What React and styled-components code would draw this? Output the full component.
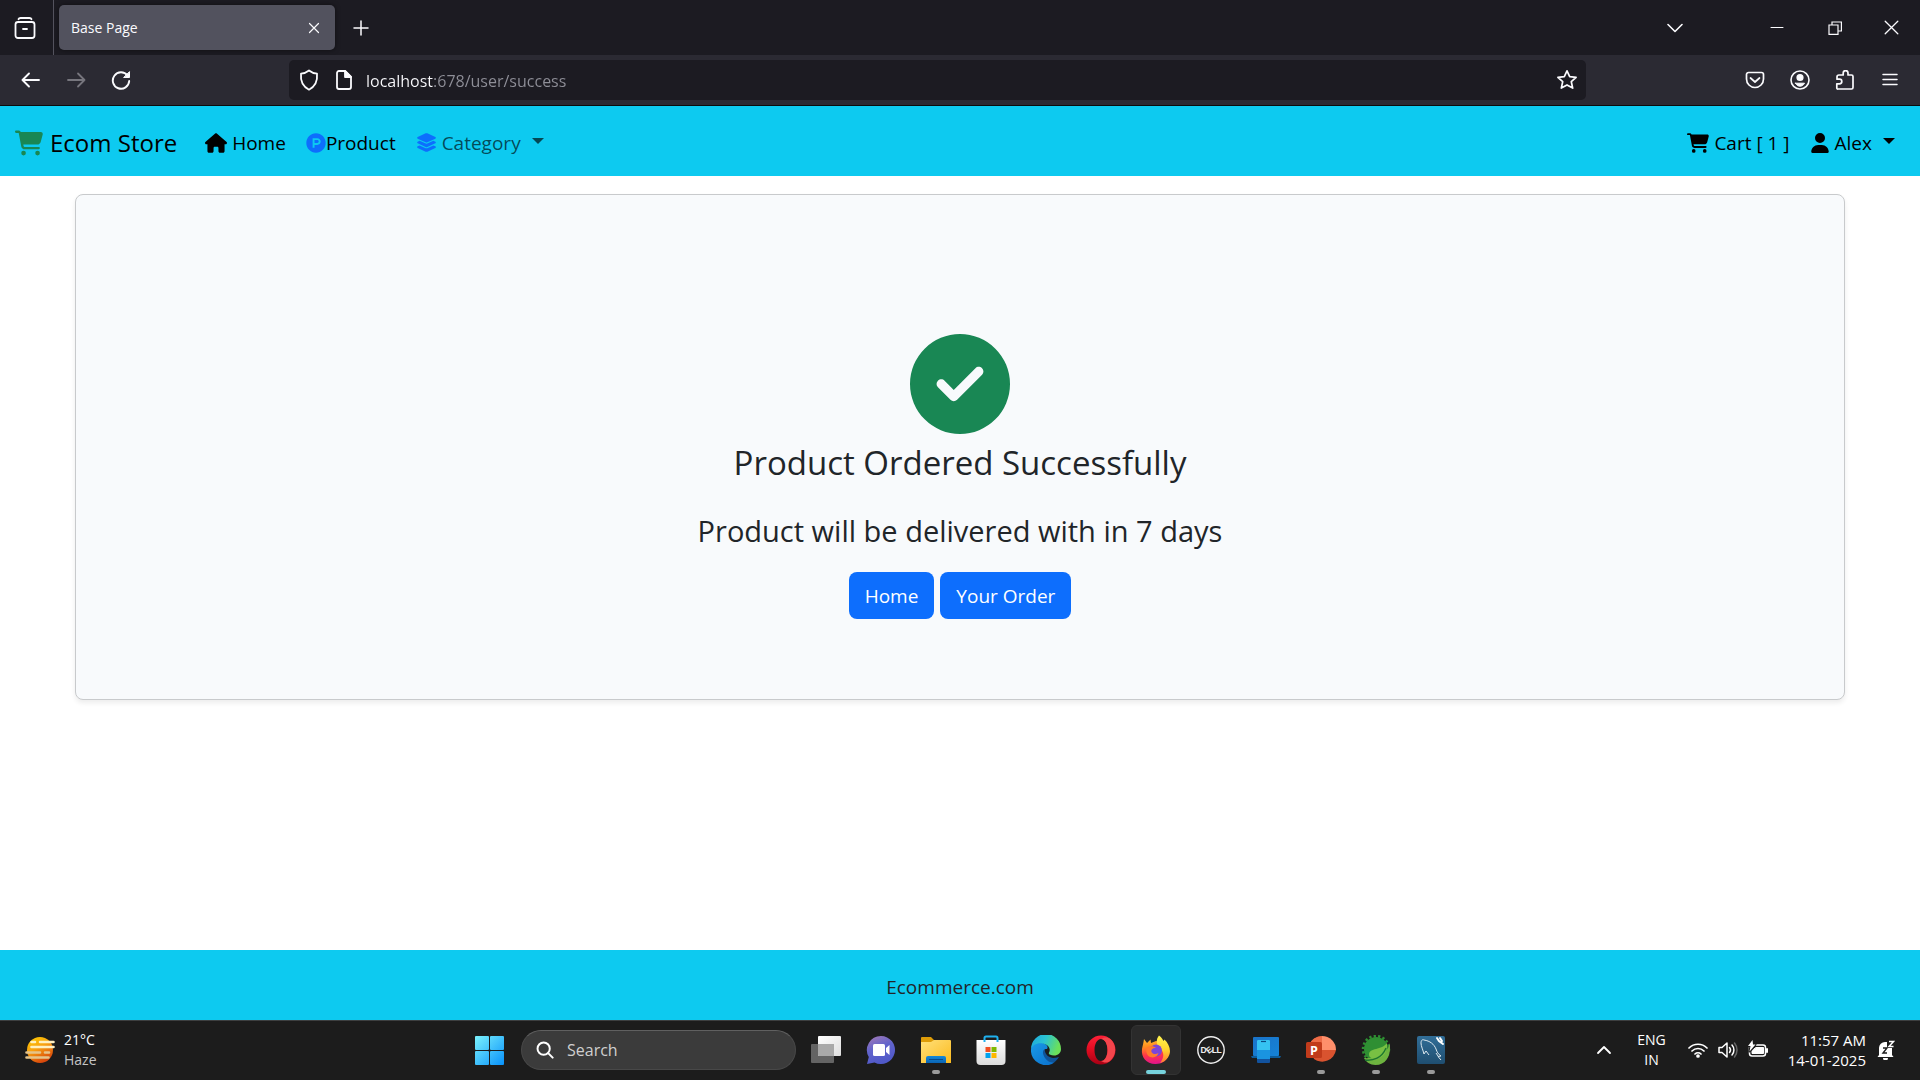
import React from 'react';
import styled, { createGlobalStyle } from 'styled-components';
import {
  FaCartShopping,
  FaHouse,
  FaProductHunt,
  FaLayerGroup,
  FaUser,
  FaCircleCheck,
} from 'react-icons/fa6';

const GlobalStyle = createGlobalStyle`
  *, *::before, *::after { box-sizing: border-box; }
  body {
    margin: 0;
    background: #fff;
    color: #212529;
    font-family: "Open Sans", "Noto Sans", sans-serif;
    font-size: 19px;
  }
  button, input { font: inherit; color: inherit; }
  button { background: none; border: 0; padding: 0; cursor: pointer; }
  a { color: inherit; text-decoration: none; }
  svg { display: block; flex: none; }
`;

const Screen = styled.div`
  display: flex;
  flex-direction: column;
  min-height: 100vh;
`;

/* Browser window */

const TabStrip = styled.header`
  display: flex;
  align-items: center;
  height: 55px;
  background: #1c1b22;
  color: #fbfbfe;
`;

const HistoryButton = styled.button`
  width: 54px;
  height: 55px;
  display: grid;
  place-items: center;
  padding-right: 4px;
  border-right: 1px solid #54535e;
`;

const Tab = styled.div`
  display: flex;
  align-items: center;
  justify-content: space-between;
  width: 276px;
  height: 45px;
  margin-left: 5px;
  padding: 0 8px 0 12px;
  border-radius: 5px;
  background: #52525e;
  box-shadow: 0 0 5px rgba(0, 0, 0, 0.5);
  font-size: 14px;
`;

const IconButton = styled.button`
  width: ${(p) => p.$width || 45}px;
  height: ${(p) => p.$height || 45}px;
  display: grid;
  place-items: center;
  color: ${(p) => p.$color || '#fbfbfe'};
`;

const WindowControls = styled.div`
  display: flex;
  margin-left: auto;
`;

const ToolBar = styled.div`
  display: flex;
  align-items: center;
  height: 51px;
  padding: 0 8px;
  background: #2b2a33;
  border-bottom: 1px solid #0c0c0d;
  color: #fbfbfe;
`;

const ToolGroup = styled.div`
  display: flex;
  width: ${(p) => p.$width}px;
  justify-content: ${(p) => p.$align || 'flex-start'};
`;

const AddressBar = styled.form`
  flex: 1;
  display: flex;
  align-items: center;
  height: 40px;
  padding: 0 8px;
  border-radius: 5px;
  background: #1c1b22;
`;

const AddressIcons = styled.div`
  display: flex;
  width: 69px;
  gap: 13px;
  padding-left: 1px;
`;

const AddressInput = styled.input`
  flex: 1;
  min-width: 0;
  height: 36px;
  padding: 2px 0 0;
  border: 0;
  outline: 0;
  font-size: 16px;
  color: transparent;
  background: linear-gradient(90deg, #fbfbfe 68px, #8f8f98 68px);
  -webkit-background-clip: text;
  background-clip: text;
`;

/* Shop page */

const NavBar = styled.nav`
  display: flex;
  align-items: center;
  height: 70px;
  padding: 3px 25px 0 15px;
  background: #0dcaf0;
  color: #000;
`;

const Brand = styled.a`
  display: flex;
  align-items: center;
  gap: 7px;
  margin-right: 28px;
  font-size: 24px;
  svg { color: #198754; }
`;

const NavLinks = styled.div`
  display: flex;
  align-items: center;
  gap: 20px;
  margin-left: ${(p) => (p.$end ? 'auto' : 0)};
`;

const NavItem = styled.a`
  display: flex;
  align-items: center;
  gap: ${(p) => (p.$tight ? 0 : 5)}px;
  color: ${(p) => (p.$muted ? 'rgba(0, 0, 0, 0.65)' : '#000')};
  white-space: nowrap;
  svg { color: ${(p) => (p.$blue ? '#0d6efd' : '#000')}; }
`;

const Caret = styled.span`
  width: 12px;
  margin: 0 0 4px 6px;
  border: 6px solid transparent;
  border-top-color: currentColor;
  border-bottom: 0;
`;

const Main = styled.main`
  flex: 1;
  padding: 18px 75px;
`;

const Card = styled.section`
  display: flex;
  flex-direction: column;
  align-items: center;
  padding: 139px 20px 80px;
  border: 1px solid #c8cacc;
  border-radius: 8px;
  background: #f8fafc;
  box-shadow: 0 3px 5px rgba(0, 0, 0, 0.075);
  text-align: center;
  > svg { color: #198754; }
`;

const Title = styled.h1`
  margin: 8px 0 0;
  font-size: 33px;
  line-height: 42px;
  font-weight: 400;
`;

const Note = styled.p`
  margin: 29px 0 23px;
  font-size: 29px;
  line-height: 36px;
`;

const Actions = styled.div`
  display: flex;
  gap: 6px;
`;

const ActionLink = styled.a`
  padding: 11px 16px 9px;
  border-radius: 8px;
  background: #0d6efd;
  color: #fff;
  line-height: 27px;
`;

const Footer = styled.footer`
  display: grid;
  place-items: center;
  height: 70px;
  padding-top: 4px;
  background: #0dcaf0;
`;

/* Desktop taskbar */

const TaskBar = styled.footer`
  display: grid;
  grid-template-columns: 1fr auto 1fr;
  align-items: center;
  height: 60px;
  padding-bottom: 1px;
  border-top: 1px solid #3d3f40;
  background: #1c1c1c;
  color: #fff;
  font-size: 14px;
  line-height: 20px;
`;

const Weather = styled.button`
  display: flex;
  align-items: center;
  gap: 9px;
  justify-self: start;
  padding: 0 0 1px 25px;
  text-align: left;
  span { display: block; }
  span + span { color: #c4c4c4; }
`;

const Apps = styled.div`
  display: flex;
  align-items: center;
  gap: 5px;
`;

const SearchBox = styled.label`
  display: flex;
  align-items: center;
  gap: 13px;
  width: 275px;
  height: 40px;
  padding: 0 14px;
  border: 1px solid #484848;
  border-top-color: #606060;
  border-radius: 20px;
  background: #3b3b3b;
  input {
    flex: 1;
    min-width: 0;
    padding: 0;
    border: 0;
    outline: 0;
    background: none;
    font-size: 16px;
  }
  input::placeholder { color: #cfcfcf; opacity: 1; }
`;

const AppButton = styled.button`
  display: flex;
  flex-direction: column;
  align-items: center;
  width: ${(p) => p.$width || 50}px;
  height: 50px;
  padding-top: 9px;
  border: 1px solid ${(p) => (p.$active ? '#333' : 'transparent')};
  border-radius: 6px;
  background: ${(p) => (p.$active ? '#2a2a2a' : 'none')};
  &::after {
    content: "";
    width: ${(p) => (p.$active ? 20 : 8)}px;
    height: 4px;
    margin-top: 5px;
    border-radius: 2px;
    background: ${(p) => (p.$active ? '#76d2dc' : p.$running ? '#9a9a9a' : 'transparent')};
  }
`;

const Tray = styled.div`
  display: flex;
  align-items: center;
  justify-self: end;
  padding-right: 25px;
`;

const TrayButton = styled.button`
  display: flex;
  align-items: center;
  gap: ${(p) => p.$gap || 0}px;
  margin-left: ${(p) => p.$space}px;
  text-align: ${(p) => p.$align || 'center'};
  span { display: block; }
`;

const Clock = styled.div`
  padding-bottom: 1px;
  font-size: 15px;
`;

const Line = ({ size = 20, box = 20, w = 1.5, children, ...rest }) => (
  <svg
    width={size}
    height={size}
    viewBox={`0 0 ${box} ${box}`}
    fill="none"
    stroke="currentColor"
    strokeWidth={w}
    strokeLinecap="round"
    strokeLinejoin="round"
    aria-hidden="true"
    {...rest}
  >
    {children}
  </svg>
);

const AppIcon = ({ children }) => (
  <svg width="30" height="30" viewBox="0 0 30 30" aria-hidden="true">{children}</svg>
);

const Gradient = ({ id, stops, x2 = 1, y2 = 1 }) => (
  <linearGradient id={id} x1="0" y1="0" x2={x2} y2={y2}>
    {stops.map((c, i) => (
      <stop key={i} offset={i / (stops.length - 1)} stopColor={c} />
    ))}
  </linearGradient>
);

const StartIcon = () => (
  <AppIcon>
    <defs>
      <linearGradient id="start" gradientUnits="userSpaceOnUse" x1="0" y1="0" x2="29" y2="29">
        <stop offset="0" stopColor="#7df3fc" />
        <stop offset="1" stopColor="#0a93fb" />
      </linearGradient>
    </defs>
    <g fill="url(#start)">
      <rect x="0" y="1" width="14" height="14" rx="1" />
      <rect x="15" y="1" width="14" height="14" rx="1" />
      <rect x="0" y="16" width="14" height="14" rx="1" />
      <rect x="15" y="16" width="14" height="14" rx="1" />
    </g>
  </AppIcon>
);

const TaskViewIcon = () => (
  <AppIcon>
    <defs><Gradient id="tv" stops={['#ffffff', '#dedede']} /></defs>
    <rect x="0" y="9" width="23" height="19" rx="1" fill="#646464" />
    <rect x="7" y="1" width="23" height="20" rx="1" fill="url(#tv)" />
    <path d="M7 9h16v12H8a1 1 0 0 1-1-1z" fill="#a9a9a9" />
  </AppIcon>
);

const ChatIcon = () => (
  <AppIcon>
    <defs><Gradient id="chat" stops={['#a87bb4', '#6264cc', '#5059c9']} y2={1} x2={0.4} /></defs>
    <path d="M15 1a14 14 0 1 1-6.500 26.400L1 29l1.800-7A14 14 0 0 1 15 1z" fill="url(#chat)" />
    <rect x="7" y="9" width="12" height="12" rx="1.500" fill="#fff" />
    <path d="M20 13l3.500-3v10L20 17z" fill="#fff" />
  </AppIcon>
);

const FolderIcon = () => (
  <AppIcon>
    <defs>
      <Gradient id="fold" stops={['#ffe07a', '#fcbb1e']} />
      <Gradient id="foldb" stops={['#1488d8', '#0a64b4']} x2={0} />
    </defs>
    <path d="M0 3a1 1 0 0 1 1-1h9l3 3h16v8H0z" fill="#dd9c08" />
    <path d="M0 7h10l3-2h16a1 1 0 0 1 1 1v22H0z" fill="url(#fold)" />
    <path d="M5 28v-5a2 2 0 0 1 2-2h16a2 2 0 0 1 2 2v5z" fill="url(#foldb)" />
    <path d="M8 24.500h14" stroke="#084a8c" strokeWidth="1" />
  </AppIcon>
);

const StoreIcon = () => (
  <AppIcon>
    <defs><Gradient id="store" stops={['#ffffff', '#dcdcdc']} x2={0} /></defs>
    <path d="M0.500 5h29v21a4 4 0 0 1-4 4h-21a4 4 0 0 1-4-4z" fill="url(#store)" />
    <path d="M8.500 7V3a1.500 1.500 0 0 1 1.500-1.500h10A1.500 1.500 0 0 1 21.500 3v4" fill="none" stroke="#1fb1ef" strokeWidth="2" />
    <rect x="9.500" y="12" width="5" height="5" fill="#f14f21" />
    <rect x="15.500" y="12" width="5" height="5" fill="#7eb900" />
    <rect x="9.500" y="18" width="5" height="5" fill="#00a3ee" />
    <rect x="15.500" y="18" width="5" height="5" fill="#feb800" />
  </AppIcon>
);

const EdgeIcon = () => (
  <AppIcon>
    <defs>
      <Gradient id="edgeTop" stops={['#1ba6e0', '#2bc3d2', '#6be05a']} y2={0.3} />
      <Gradient id="edgeLeft" stops={['#1a9be8', '#0a6fcc']} />
    </defs>
    <path d="M28 22A15 15 0 0 1 8 28C5 20 8 14 14 12c-1 5 1 10 8 11 2 0 4-.300 6-1z" fill="#0f5499" />
    <path d="M0 14c1-6 7-8 12-6 4 1.500 5.500 4 4 6-5-1-5 5-2 9s7 5.500 10 4A15 15 0 0 1 0 14z" fill="url(#edgeLeft)" />
    <path d="M0 14A15 15 0 0 1 30 14c0 4-3 6.500-7 6.500-3.500 0-6-1-5-3 2-3 0-8-6-9C6 7.500 1.500 10 0 14z" fill="url(#edgeTop)" />
  </AppIcon>
);

const OperaIcon = () => (
  <AppIcon>
    <defs><Gradient id="op" stops={['#ff2038', '#e00b20', '#a70014']} x2={0} /></defs>
    <path d="M15 0.500a14.500 14.500 0 1 0 0 29 14.500 14.500 0 1 0 0-29zm0 3.500c4 0 6.500 5 6.500 11S19 26 15 26 8.500 21 8.500 15 11 4 15 4z" fill="url(#op)" fillRule="evenodd" />
    <path d="M15 4c2-1.500 6-2.500 9-.200A14.500 14.500 0 0 1 24 26c-3 2.500-7 1.500-9 0 4 0 6.500-5 6.500-11S19 4 15 4z" fill="#f4454c" />
  </AppIcon>
);

const FirefoxIcon = () => (
  <AppIcon>
    <defs>
      <Gradient id="ff" stops={['#ffbd2f', '#ff8a1e', '#ff3647', '#e31587']} x2={0.1} />
      <Gradient id="ffy" stops={['#fff44f', '#ffd52e', '#ff7a30']} x2={0} />
    </defs>
    <path d="M3 4l3 4 3.500-3.500.500 3.500 5-2 11 3c4 7 2 20-11.500 20C5 29 0 22 1 14c.500-3 1.500-6 2-10z" fill="url(#ff)" />
    <path d="M18 0.500c3 2 3.500 4 4.500 5.500l1-1.500c5 5 7.500 12 3.500 18-2 3-5 5-8 5.500 5-6 4-12-1-16-3-3-3-8 0-11.500z" fill="url(#ffy)" />
    <circle cx="15" cy="15.500" r="6" fill="#7b45d8" />
    <path d="M6 12c4-1 7-1 9 1-4 0-5 2-4.500 4 1 2 4 3 7 1-1 4-6 6-10 3-2-2-3-6-1.500-9z" fill="#ff7b2b" />
  </AppIcon>
);

const DellIcon = () => (
  <AppIcon>
    <circle cx="15" cy="15" r="13.200" fill="none" stroke="#eee" strokeWidth="1.400" />
    <g fill="#eee" fontFamily="Liberation Sans, sans-serif" fontWeight="700" fontSize="8.500" textAnchor="middle">
      <text x="7.500" y="18">D</text>
      <text x="13.200" y="18" transform="rotate(-38 13.200 15)">E</text>
      <text x="18.400" y="18">L</text>
      <text x="23" y="18">L</text>
    </g>
  </AppIcon>
);

const PhoneLinkIcon = () => (
  <AppIcon>
    <defs><Gradient id="pl" stops={['#1a73c8', '#1583d8']} /></defs>
    <rect x="2" y="2" width="26" height="19" rx="1" fill="url(#pl)" />
    <path d="M0 21h30l-1 2H1z" fill="#0c5c9c" />
    <rect x="6" y="5" width="13" height="23" rx="1" fill="#12539f" />
    <path d="M6 6a1 1 0 0 1 1-1h11a1 1 0 0 1 1 1v9H6z" fill="#36c3f2" />
    <path d="M6 15h13v9H6z" fill="#1a94e0" />
    <path d="M10 6.500h5" stroke="#0a4b83" strokeWidth="1.200" />
  </AppIcon>
);

const PowerPointIcon = () => (
  <AppIcon>
    <path d="M16 15V1a14 14 0 0 0-13 9l5 14a14 14 0 0 0 22-9z" fill="#d9532f" />
    <path d="M16 1a14 14 0 0 1 14 14H16z" fill="#ff8f6b" />
    <path d="M16 1a14 14 0 0 0-13 9l5 5h8z" fill="#ed6c47" />
    <rect x="0" y="7" width="16" height="16" rx="1.500" fill="#c13b1b" />
    <text x="8" y="19.500" fill="#fff" fontFamily="Open Sans, sans-serif" fontWeight="700" fontSize="12.500" textAnchor="middle">P</text>
  </AppIcon>
);

const SpringIcon = () => (
  <AppIcon>
    <circle cx="15" cy="14" r="12" fill="#2f8f33" />
    <circle cx="15" cy="14" r="13" fill="none" stroke="#2f8f33" strokeWidth="2.500" strokeDasharray="2.300 2.200" />
    <path d="M28.500 8c2 10-2 22-14 22C9 30 5 27 3 23 12 24 27 20 28.500 8z" fill="#6db33f" />
    <path d="M26 8c1 9-4 15-10 15.500-5 .500-8-1-8-4 0-7 13-4 18-11.500z" fill="#78c043" />
    <path d="M4 25c8 1 17-2 21-12" fill="none" stroke="#1d7630" strokeWidth="1.400" />
  </AppIcon>
);

const WorkbenchIcon = () => (
  <AppIcon>
    <defs><Gradient id="wb" stops={['#316e98', '#1f4e70']} x2={0} /></defs>
    <rect x="1" y="1" width="28" height="28" rx="2" fill="url(#wb)" />
    <path d="M8 19c-1-4-3-8-3-11 0-2 1-4 3-3 6 1 10 4 12 9 1 3 2 5 5 7l-3 .500 3 3.500M8 19l2-3 3 4M20 18l2 3" fill="none" stroke="#dde9f0" strokeWidth="1" strokeLinejoin="round" />
    <path d="M21 3l2 3 4 3M24 3l2 3" fill="none" stroke="#fff" strokeWidth="2" strokeLinecap="round" />
  </AppIcon>
);

const HazeIcon = () => (
  <svg width="30" height="30" viewBox="0 0 30 30" aria-hidden="true">
    <defs><Gradient id="haze" stops={['#fdd000', '#f8a010', '#d8480c']} x2={0.5} /></defs>
    <circle cx="15" cy="15" r="13" fill="url(#haze)" />
    <g strokeLinecap="round" strokeWidth="2.600">
      <path d="M6.500 7h3.500M15 7h13.500M6.500 12h22" stroke="#fff0c0" />
      <path d="M1.500 17.500h13.500M20 17.500h4M1.500 22.500h22" stroke="#e5c48a" />
    </g>
  </svg>
);

const apps = [
  { name: 'Task view', icon: TaskViewIcon },
  { name: 'Chat', icon: ChatIcon },
  { name: 'File Explorer', icon: FolderIcon, running: true },
  { name: 'Microsoft Store', icon: StoreIcon },
  { name: 'Edge', icon: EdgeIcon },
  { name: 'Opera', icon: OperaIcon },
  { name: 'Firefox', icon: FirefoxIcon, active: true },
  { name: 'Dell', icon: DellIcon },
  { name: 'Phone Link', icon: PhoneLinkIcon },
  { name: 'PowerPoint', icon: PowerPointIcon, running: true },
  { name: 'Spring Tools', icon: SpringIcon, running: true },
  { name: 'MySQL Workbench', icon: WorkbenchIcon, running: true },
];

function BrowserChrome() {
  return (
    <>
      <TabStrip>
        <HistoryButton aria-label="Recent browsing">
          <Line size={22} box={22} w={1.8}>
            <path d="M4.500 2.200Q5 1 6.500 1h9q1.500 0 2 1.200" />
            <rect x="1.500" y="5" width="19" height="16" rx="2.500" />
            <path d="M9 12h4" />
          </Line>
        </HistoryButton>
        <Tab>
          Base Page
          <IconButton $width={26} $height={26} aria-label="Close tab">
            <Line size={12} box={12} w={1.2}><path d="M1.500 1.500l9 9m0-9l-9 9" /></Line>
          </IconButton>
        </Tab>
        <IconButton $width={52} aria-label="New tab">
          <Line size={16} box={16}><path d="M8 1v14M1 8h14" /></Line>
        </IconButton>
        <WindowControls>
          <IconButton $width={146} aria-label="List all tabs">
            <Line size={16} box={16} w={1.6}><path d="M1 4.500l7 7 7-7" /></Line>
          </IconButton>
          <IconButton $width={58} aria-label="Minimize">
            <Line size={14} box={14} w={1}><path d="M1 6.500h12" /></Line>
          </IconButton>
          <IconButton $width={57} aria-label="Restore">
            <Line size={14} box={14} w={1.2} strokeLinejoin="miter"><path d="M1 4h9v9.400H1zM4 4V1h9.400v9H10" /></Line>
          </IconButton>
          <IconButton $width={57} aria-label="Close">
            <Line size={15} box={15} w={1.3}><path d="M1.200 1.200l12.600 12.600m0-12.600L1.200 13.800" /></Line>
          </IconButton>
        </WindowControls>
      </TabStrip>
      <ToolBar>
        <ToolGroup $width={281}>
          <IconButton aria-label="Back">
            <Line w={1.9}><path d="M18 10H1.500M8 3.500L1.500 10 8 16.500" /></Line>
          </IconButton>
          <IconButton $color="#77767e" aria-label="Forward">
            <Line w={1.8}><path d="M2 10h16.500M12 3.500l6.500 6.500-6.500 6.500" /></Line>
          </IconButton>
          <IconButton aria-label="Reload">
            <Line w={1.9}>
              <path d="M16.500 5.500A8.200 8.200 0 1 0 18.200 11" />
              <path d="M18.500 2v5.500H13z" fill="currentColor" strokeWidth="1" />
            </Line>
          </IconButton>
        </ToolGroup>
        <AddressBar onSubmit={(e) => e.preventDefault()}>
          <AddressIcons>
            <Line size={22} box={22} w={1.8}>
              <path d="M11 1.500c2.500 2 5.500 3 8 3.200.700 7.300-2 13-8 16-6-3-8.700-8.700-8-16 2.500-.200 5.500-1.200 8-3.200z" />
            </Line>
            <Line size={22} box={22} w={1.8}>
              <path d="M12 2H6a2 2 0 0 0-2 2v14a2 2 0 0 0 2 2h10a2 2 0 0 0 2-2V8z" />
              <path d="M12 2v6h6z" fill="currentColor" />
            </Line>
          </AddressIcons>
          <AddressInput aria-label="Address" defaultValue="localhost:678/user/success" />
          <IconButton $width={22} $height={36} type="button" aria-label="Bookmark this page">
            <Line size={22} box={22} w={1.7}>
              <path d="M11 1.800l2.700 5.900 6.400.700-4.800 4.300 1.400 6.400L11 15.900l-5.700 3.200 1.400-6.400L1.900 8.400l6.400-.700z" />
            </Line>
          </IconButton>
        </AddressBar>
        <ToolGroup $width={326} $align="flex-end">
          <IconButton aria-label="Save to Pocket">
            <Line w={1.7}>
              <path d="M3.500 2.500h13a2 2 0 0 1 2 2V9a8.500 8.500 0 0 1-17 0V4.500a2 2 0 0 1 2-2z" />
              <path d="M5.500 8l4.500 4 4.500-4" />
            </Line>
          </IconButton>
          <IconButton aria-label="Account">
            <Line w={1.6}>
              <circle cx="10" cy="10" r="9" />
              <circle cx="10" cy="7.500" r="2.800" fill="currentColor" />
              <path d="M5.500 13.200h9c-1 2-2.600 3-4.500 3s-3.500-1-4.500-3z" fill="currentColor" strokeWidth="1" />
            </Line>
          </IconButton>
          <IconButton aria-label="Extensions">
            <Line w={1.7}>
              <path d="M3 19h13.500a1.500 1.500 0 0 0 1.500-1.500v-11A1.500 1.500 0 0 0 16.500 5H13V3a2.400 2.400 0 0 0-4.800 0v2H4a2 2 0 0 0-2 2v2.200h2.500a2.300 2.300 0 0 1 0 4.600H1.800V18A1 1 0 0 0 3 19z" />
            </Line>
          </IconButton>
          <IconButton aria-label="Application menu">
            <Line size={16} box={16} w={1.5}><path d="M1 2.500h14M1 7.500h14M1 12.500h14" /></Line>
          </IconButton>
        </ToolGroup>
      </ToolBar>
    </>
  );
}

function ShopPage() {
  return (
    <>
      <NavBar>
        <Brand href="#">
          <FaCartShopping size={28} />
          Ecom Store
        </Brand>
        <NavLinks>
          <NavItem href="#"><FaHouse size={22} />Home</NavItem>
          <NavItem href="#" $tight $blue><FaProductHunt size={20} />Product</NavItem>
          <NavItem as="button" type="button" $muted $blue aria-haspopup="menu">
            <FaLayerGroup size={21} />Category<Caret />
          </NavItem>
        </NavLinks>
        <NavLinks $end>
          <NavItem href="#"><FaCartShopping size={22} />Cart [ 1 ]</NavItem>
          <NavItem as="button" type="button" aria-haspopup="menu">
            <FaUser size={20} />Alex<Caret />
          </NavItem>
        </NavLinks>
      </NavBar>
      <Main>
        <Card>
          <FaCircleCheck size={100} />
          <Title>Product Ordered Successfully</Title>
          <Note>Product will be delivered with in 7 days</Note>
          <Actions>
            <ActionLink href="#">Home</ActionLink>
            <ActionLink href="#">Your Order</ActionLink>
          </Actions>
        </Card>
      </Main>
      <Footer>Ecommerce.com</Footer>
    </>
  );
}

function DesktopBar() {
  return (
    <TaskBar>
      <Weather>
        <HazeIcon />
        <div><span>21°C</span><span>Haze</span></div>
      </Weather>
      <Apps>
        <AppButton $width={52} aria-label="Start"><StartIcon /></AppButton>
        <SearchBox>
          <Line size={18} w={2.2}><circle cx="8.500" cy="8.500" r="6.800" /><path d="M13.500 13.500l5 5" /></Line>
          <input type="text" placeholder="Search" aria-label="Search" />
        </SearchBox>
        {apps.map(({ name, icon: Icon, running, active }) => (
          <AppButton key={name} aria-label={name} $running={running} $active={active}>
            <Icon />
          </AppButton>
        ))}
      </Apps>
      <Tray>
        <TrayButton $space={0} aria-label="Show hidden icons">
          <Line size={16} box={16} w={1.8}><path d="M2 11l6-6 6 6" /></Line>
        </TrayButton>
        <TrayButton $space={25}>
          <div><span>ENG</span><span>IN</span></div>
        </TrayButton>
        <TrayButton $space={22} $gap={10} aria-label="Network, volume and battery">
          <Line w={1.7}>
            <path d="M1 8a12.700 12.700 0 0 1 18 0M4 11a8.500 8.500 0 0 1 12 0M7 14a4.300 4.300 0 0 1 6 0" />
            <circle cx="10" cy="16" r="1" fill="currentColor" />
          </Line>
          <Line w={1.5}>
            <path d="M1 7.500v5h3L9 17V3L4 7.500zM11.500 7.500a4 4 0 0 1 0 5M14 5a7.500 7.500 0 0 1 0 10" />
            <path d="M16.500 3a11 11 0 0 1 0 14" stroke="#666" />
          </Line>
          <Line w={1.5}>
            <rect x="1.500" y="5" width="16" height="11" rx="2.500" />
            <path d="M8 7.500h7.500v6H4V11z" fill="currentColor" strokeWidth="1" />
            <path d="M19 9v3" strokeWidth="2" />
            <path d="M4.500 0L0 6h2.500L1.500 11.500 7.500 4.500H5z" fill="#fff" stroke="#1c1c1c" strokeWidth="2" paintOrder="stroke" />
          </Line>
        </TrayButton>
        <TrayButton $space={20} $gap={11} $align="right">
          <Clock><span>11:57 AM</span><span>14-01-2025</span></Clock>
          <svg width="18" height="20" viewBox="0 0 18 20" aria-hidden="true">
            <path d="M2 15V8a6 6 0 0 1 6-6h2v6h5v7l1.500 2H.500z" fill="#fff" />
            <path d="M6 18h5a2.500 2.500 0 0 1-5 0z" fill="#fff" />
            <path d="M6 8h4l-4 5h4" fill="none" stroke="#1c1c1c" strokeWidth="1.400" />
            <path d="M12 1.500h4.500L12 6.500h4.500" fill="none" stroke="#fff" strokeWidth="1.500" />
          </svg>
        </TrayButton>
      </Tray>
    </TaskBar>
  );
}

export default function App() {
  return (
    <Screen>
      <GlobalStyle />
      <BrowserChrome />
      <ShopPage />
      <DesktopBar />
    </Screen>
  );
}
